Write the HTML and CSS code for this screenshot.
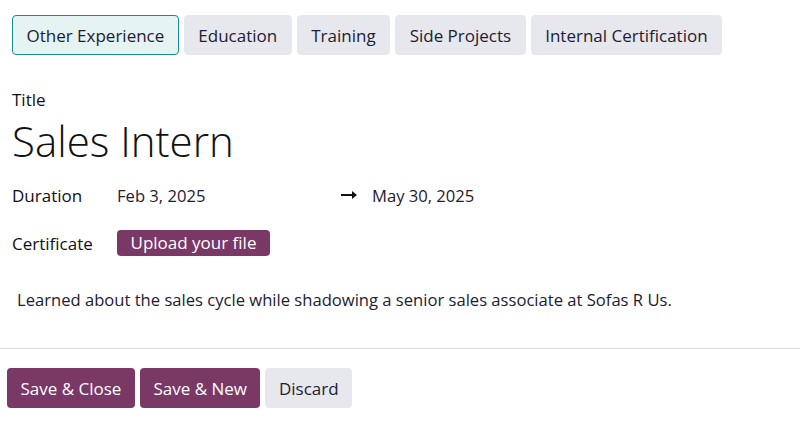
FILE: index.html
```html
<!DOCTYPE html>
<html>
<head>
<meta charset="utf-8">
<link rel="stylesheet" href="styles.css">
</head>
<body>
<div class="tabs">
  <div class="tab active">Other Experience</div>
  <div class="tab">Education</div>
  <div class="tab">Training</div>
  <div class="tab">Side Projects</div>
  <div class="tab">Internal Certification</div>
</div>
<div class="form">
  <div class="label title-label">Title</div>
  <div class="title">Sales Intern</div>
  <div class="row duration">
    <div class="label">Duration</div>
    <div class="dates">
      <span class="date-start">Feb 3, 2025</span>
      <span class="arrow"><svg width="17" height="10" viewBox="0 0 17 10"><path d="M0 5H13" stroke="#111" stroke-width="2"/><path d="M11 1L16 5L11 9Z" fill="#111"/></svg></span>
      <span class="date-end">May 30, 2025</span>
    </div>
  </div>
  <div class="row cert">
    <div class="label">Certificate</div>
    <div><span class="upload">Upload your file</span></div>
  </div>
  <div class="desc">Learned about the sales cycle while shadowing a senior sales associate at Sofas R Us.</div>
</div>
<div class="footer">
  <button class="btn primary">Save &amp; Close</button>
  <button class="btn primary">Save &amp; New</button>
  <button class="btn secondary">Discard</button>
</div>
</body>
</html>
```
FILE: styles.css
```css
body {
  margin: 0;
  font-family: "Open Sans", "Noto Sans", sans-serif;
  color: #1f2030;
  background: #fff;
}
.tabs {
  display: flex;
  gap: 5px;
  padding: 15px 12px 0;
}
.tab {
  height: 40px;
  box-sizing: border-box;
  display: flex;
  align-items: center;
  padding: 0 13.5px;
  font-size: 17px;
  background: #e7e8ed;
  border: 1px solid #e7e8ed;
  border-radius: 4px;
}
.tab.active {
  background: #e5f3f3;
  border-color: #1a8a8e;
}
.form {
  padding: 0 12px;
}
.label {
  font-size: 17px;
  font-weight: 500;
  color: #111;
}
.title-label {
  margin-top: 35px;
  line-height: 20px;
}
.title {
  margin-top: 5px;
  font-size: 42px;
  font-weight: 300;
  line-height: 52px;
  color: #111;
}
.row {
  display: flex;
  align-items: center;
}
.row .label {
  width: 105px;
}
.duration {
  margin-top: 13px;
  height: 30px;
}
.dates {
  display: flex;
  align-items: center;
  font-size: 16.6px;
}
.date-start {
  width: 224px;
}
.arrow {
  display: flex;
  width: 31px;
}
.cert {
  margin-top: 18px;
  height: 30px;
}
.upload {
  display: inline-block;
  background: #7a3866;
  color: #fff;
  font-size: 17px;
  line-height: 24px;
  border-radius: 4px;
  padding: 1px 13.5px;
}
.desc {
  margin-top: 31px;
  padding-left: 5px;
  font-size: 16.6px;
  line-height: 22px;
}
.footer {
  margin-top: 37px;
  border-top: 1px solid #dcdde0;
  display: flex;
  gap: 5px;
  padding: 19px 7px;
}
.btn {
  font-family: inherit;
  height: 40px;
  padding: 0 13.5px;
  font-size: 17px;
  border-radius: 4px;
  border: none;
}
.primary {
  background: #7a3866;
  color: #fff;
}
.secondary {
  background: #e7e8ed;
  color: #1f2030;
}
```
